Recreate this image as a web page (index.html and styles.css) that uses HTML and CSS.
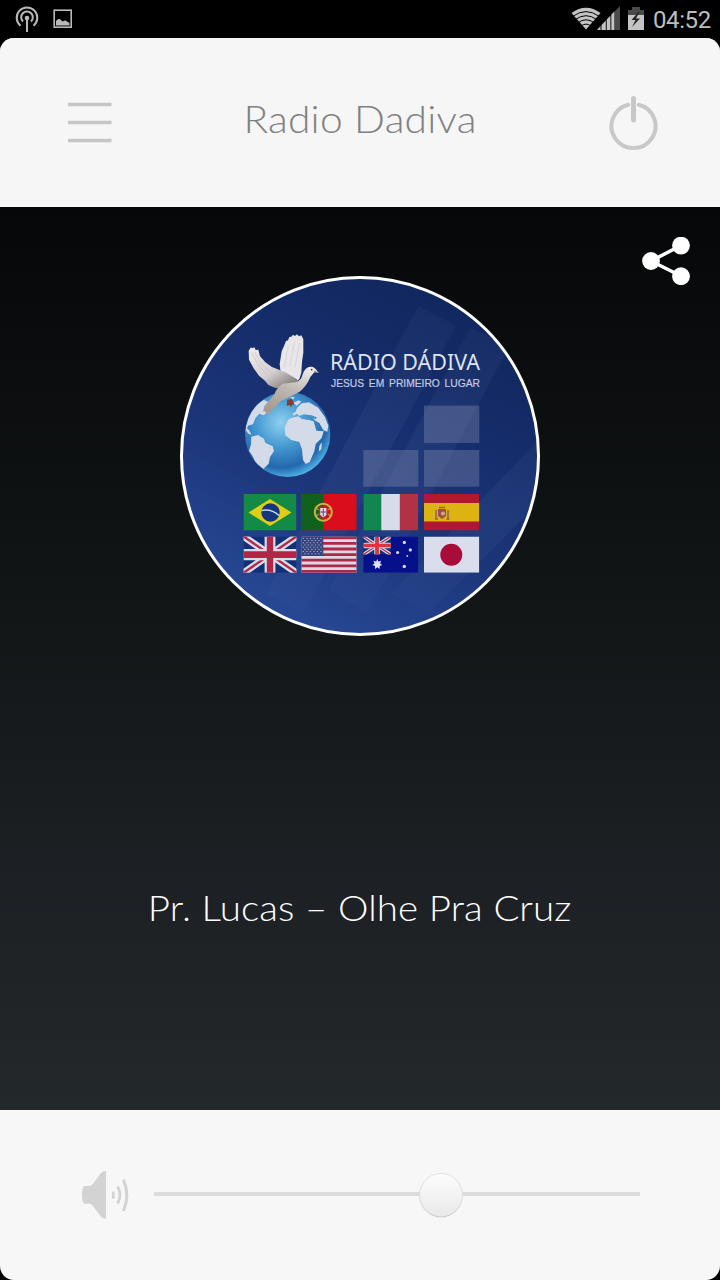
FILE: index.html
```html
<!DOCTYPE html>
<html lang="pt">
<head>
    <meta charset="UTF-8">
    <meta name="viewport" content="width=device-width, initial-scale=1.0">
    <title>Radio Dadiva</title>
    <link rel="stylesheet" href="styles.css">
</head>
<body>

    <div class="status-bar">
        <svg class="status-left" width="80" height="38" viewBox="0 0 80 38">
            <g fill="none" stroke="#b9b9b9" stroke-width="2">
                <path d="M20.5 25.7A10.3 10.3 0 1 1 33.5 25.7"/>
                <path d="M23 21.5A5.8 5.8 0 1 1 31 21.5"/>
                <path d="M27 18v14"/>
                <rect x="54.2" y="10.2" width="17" height="17" stroke-width="1.6"/>
            </g>
            <circle cx="27" cy="18" r="2.3" fill="#b9b9b9"/>
            <path d="M56 25.500v-4.500q1.500-2.500 4-2 1 1.500 3 2.500 2.500-2 4 0l2.500 1.500v2.500z" fill="#b9b9b9"/>
        </svg>
        <div class="status-right">
            <svg width="76" height="38" viewBox="570 0 76 38">
                <path d="M571.500 13Q586 2.500 600.500 13L586 29.500z" fill="#c4c4c4"/>
                <g fill="none" stroke="#000" stroke-width="1">
                    <path d="M573 16.200Q586 7 599 16.200"/>
                    <path d="M575.500 19.400Q586 12 596.500 19.400"/>
                    <path d="M578 22.600Q586 17 594 22.600"/>
                    <path d="M581 25.800Q586 22.500 591 25.800"/>
                </g>
                <path d="M620 6v24h-5V11z" fill="#4a4a4a"/>
                <path d="M597 30l3.500-4v4zM601.500 24.900l4.300-4.400V30h-4.300zM606.700 19.500l3.700-3.700V30h-3.700zM611.300 14.700l3.200-3.400V30h-3.200z" fill="#c4c4c4"/>
                <path d="M632 7h8v3h4v6h-16v-6h4z" fill="#4a4a4a"/>
                <path d="M628 15h16v15h-16z" fill="#c4c4c4"/>
                <path d="M638.500 12l-7 8h4l-3.500 7 8-8.500h-4l3.500-6.500z" fill="#222"/>
            </svg>
            <span class="clock">04:52</span>
        </div>
    </div>

    <div class="app">
        <div class="header">
            <svg class="menu-icon" width="44" height="42" viewBox="0 0 44 42">
                <path d="M0 2.500h43.500M0 20.500h43.500M0 38.500h43.500" stroke="#c6c6c6" stroke-width="3.600"/>
            </svg>
            <h1 class="title">Radio Dadiva</h1>
            <svg class="power-icon" width="50" height="56" viewBox="608 95 50 56" fill="none" stroke="#c8c8c8" stroke-linecap="round">
                <path d="M628.200 104.700A22 22 0 1 0 638.800 104.700" stroke-width="4"/>
                <path d="M633.500 98.500v21.500" stroke-width="5"/>
            </svg>
        </div>

        <div class="player">
            <svg class="share-icon" width="48" height="48" viewBox="642 237 48 48">
                <path d="M681 245.500L651 261l30 15" fill="none" stroke="#fff" stroke-width="3.500"/>
                <g fill="#fff">
                    <circle cx="681" cy="245.600" r="8.900"/>
                    <circle cx="651" cy="261" r="8.900"/>
                    <circle cx="681" cy="276.200" r="8.900"/>
                </g>
            </svg>

            <svg class="cover" width="360" height="360" viewBox="180 276 360 360">
                <defs>
                    <linearGradient id="sky" x1=".75" y1="0" x2=".25" y2="1">
                        <stop offset="0" stop-color="#10265c"/>
                        <stop offset=".25" stop-color="#142b67"/>
                        <stop offset=".6" stop-color="#1b3579"/>
                        <stop offset="1" stop-color="#294b98"/>
                    </linearGradient>
                    <linearGradient id="streak" x1="0" y1="0" x2="0" y2="1">
                        <stop offset="0" stop-color="#a5bde8" stop-opacity=".04"/>
                        <stop offset=".45" stop-color="#a5bde8" stop-opacity=".06"/>
                        <stop offset="1" stop-color="#a5bde8" stop-opacity=".02"/>
                    </linearGradient>
                    <radialGradient id="sea" cx=".42" cy=".36" r=".65">
                        <stop offset="0" stop-color="#8fd0ee"/>
                        <stop offset=".45" stop-color="#4399d1"/>
                        <stop offset=".82" stop-color="#2467ad"/>
                        <stop offset="1" stop-color="#4bafe2"/>
                    </radialGradient>
                    <linearGradient id="wing" x1="0" y1="0" x2=".8" y2="1">
                        <stop offset="0" stop-color="#f1eeee"/>
                        <stop offset=".6" stop-color="#d5d0d0"/>
                        <stop offset="1" stop-color="#7e7874"/>
                    </linearGradient>
                    <linearGradient id="body" x1=".8" y1="0" x2=".3" y2="1">
                        <stop offset="0" stop-color="#f0ece9"/>
                        <stop offset=".5" stop-color="#bfb7b1"/>
                        <stop offset="1" stop-color="#a69a91"/>
                    </linearGradient>
                    <clipPath id="disc"><circle cx="360" cy="456" r="178"/></clipPath>
                    <clipPath id="globe"><circle cx="173" cy="343" r="127"/></clipPath>
                    <symbol id="uk" viewBox="0 0 54 36" preserveAspectRatio="none">
                        <path d="M0 0h54v36H0z" fill="#123078"/>
                        <path d="M0 0l54 36M54 0L0 36" stroke="#d9dcea" stroke-width="7"/>
                        <path d="M0 0l54 36M54 0L0 36" stroke="#b32a49" stroke-width="2.400"/>
                        <path d="M27 0v36M0 18h54" stroke="#d9dcea" stroke-width="11"/>
                        <path d="M27 0v36M0 18h54" stroke="#b52546" stroke-width="6.500"/>
                    </symbol>
                </defs>

                <g clip-path="url(#disc)">
                    <path d="M180 276h360v360H180z" fill="url(#sky)"/>
                    <g transform="translate(170 265) scale(.33333)" fill="url(#streak)">
                        <path d="M745 122l113 60-458 863-110-60z"/>
                        <path d="M900 190l120 50-430 805-112-72z"/>
                        <path d="M1120 510v190l-345 345-110-60z"/>
                    </g>
                </g>
                <circle cx="360" cy="456" r="178.500" fill="none" stroke="#fff" stroke-width="3"/>

                <!-- globe -->
                <g transform="translate(230 320) scale(.33333)">
                    <circle cx="173" cy="343" r="128" fill="url(#sea)"/>
                    <g clip-path="url(#globe)" fill="#d3dae8">
                        <path d="M102 240l26 12-8 20-20 14-12-5-12 14-7 18-15 4-6 20-9-10 10-42 24-34z"/>
                        <path d="M45 322l12 8 8 16-12-6z"/>
                        <path d="M64 350l20-5 18 11 4 12 22 11 4 14-12 18-4 20-16 16-4 18-7 0-12-36-10-22-10-14 6-20z"/>
                        <path d="M183 294l22-5 10 8 22 3 14 4 8 28 22 2-6 20-18 18-4 22-14 32-12 6-8-12-3-32-8-22-24-6-18-14-2-24 10-22z"/>
                        <path d="M187 281l10-6 4-11 14-14 22-3 28 16 20 28 10 26-3 18-12-4-12-22-14-8-10-14-22-4-14 4-8-6-8 6z"/>
                        <path d="M188 250l18-9 8 4-14 12zM268 378l8-12-2 22-8 6zM180 232l14-2-5 9z"/>
                    </g>
                    <path d="M230 284l14 2 16 6-2 6-18-6z" fill="#4a91c5"/>
                </g>

                <!-- dove -->
                <g transform="translate(230 320) scale(.33333)">
                    <path d="M151 150l-2-18 6-38 8-18 5-13 6-2 4-10 6-1 5-6 6 4 6-5 6 6 7-3 6 12 0 40-4 28-2 32-6 19-16 14-28-2z" fill="#e8e6e8"/>
                    <path d="M163 142l12-65M179 140l15-75M195 143l14-74" fill="none" stroke="#cfccd0" stroke-width="2"/>
                    <path d="M56 92l7-10 3 3 7-3 4 8 8-1 5 20 16 18 20 14 40 16 34 20 8 12-7 10-42 7-24-3-20-8-10-13-18-15-16-22-14-26z" fill="url(#wing)"/>
                    <path d="M64 98l22 38 30 34M74 96l20 36 38 34" fill="none" stroke="#c4bec0" stroke-width="2"/>
                    <path d="M221 155q10-18 28-14l8 6 9 12-13-2-12 14q-10 26-32 44l-38 20-18 7q-20 23-42 43l-6-12-6 2 4-16 30-36q6-20 26-32l42-5 12-10z" fill="url(#body)"/>
                    <circle cx="245" cy="149" r="2.500" fill="#38251f"/>
                    <path d="M251 151l15 8-10-1z" fill="#806351"/>
                    <path d="M172 240l14-4 4 10 4 10-8-3-2 9-6-7-8 2z" fill="#803c36"/>
                </g>

                <text class="brand" x="330" y="370.300" textLength="150" lengthAdjust="spacingAndGlyphs">RÁDIO DÁDIVA</text>
                <text class="slogan" x="331" y="386.500" textLength="149" lengthAdjust="spacingAndGlyphs">JESUS EM PRIMEIRO LUGAR</text>

                <g fill="#8894b5" fill-opacity=".36">
                    <rect x="424" y="405.600" width="55.300" height="37.300"/>
                    <rect x="363.300" y="450" width="55" height="36.700"/>
                    <rect x="424" y="450" width="55.300" height="36.700"/>
                </g>

                <!-- flags, first row -->
                <svg x="243.500" y="494" width="53" height="36.600" viewBox="0 0 53 36.600">
                    <path d="M0 0h53v36.600H0z" fill="#138a45"/>
                    <path d="M5 18.500L26.500 5 48 18.500 26.500 32z" fill="#dfce16"/>
                    <circle cx="27" cy="18.500" r="9.200" fill="#16357f"/>
                    <path d="M18 16.500q10-2 17.500 5" fill="none" stroke="#c9d8e7" stroke-width="1.500"/>
                </svg>
                <svg x="301.300" y="494" width="55.400" height="36.600" viewBox="0 0 55.400 36.600">
                    <path d="M0 0h55.400v36.600H0z" fill="#d90d1b"/>
                    <path d="M0 0h22v36.600H0z" fill="#11611e"/>
                    <circle cx="22" cy="18.300" r="8.500" fill="none" stroke="#c7b540" stroke-width="2"/>
                    <path d="M14 14l16 8M14 22l16-8" stroke="#c7b540"/>
                    <path d="M17.500 12.500h9v8q-1 4-4.500 5-3.500-1-4.500-5z" fill="#c71c2d"/>
                    <path d="M19 14h6v7l-3 2.500-3-2.500z" fill="#e2e4ee"/>
                    <path d="M22 14.500v8M19.500 18h5" stroke="#4d6eae" stroke-width="1.300"/>
                </svg>
                <svg x="363.300" y="494" width="55" height="36.600" viewBox="0 0 55 36.600">
                    <path d="M0 0h18.500v36.600H0z" fill="#128650"/>
                    <path d="M18 0h19v36.600H18z" fill="#d8dbea"/>
                    <path d="M36.500 0H55v36.600H36.500z" fill="#b13246"/>
                </svg>
                <svg x="424" y="494" width="55.300" height="36.600" viewBox="0 0 55.300 36.600">
                    <path d="M0 0h55.300v36.600H0z" fill="#b11632"/>
                    <path d="M0 9h55.300v18.500H0z" fill="#dcb310"/>
                    <path d="M14 15h8v7l-4 3-4-3z" fill="#a54c45"/>
                    <path d="M12 16v9M24 16v9M11 25h3M22.500 25h3M15 13.500h6" stroke="#94604d" stroke-width="1.500"/>
                    <circle cx="19" cy="19.500" r="2" fill="#c3a9a5"/>
                </svg>

                <!-- flags, second row -->
                <use href="#uk" x="243.500" y="536.400" width="53" height="36.400"/>
                <svg x="301.300" y="536.400" width="55.400" height="36.400" viewBox="0 0 55.400 36.400">
                    <path d="M0 0h55.400v36.400H0z" fill="#dcd9e4"/>
                    <path d="M0 1.400h55.400M0 7h55.400M0 12.600h55.400M0 18.200h55.400M0 23.800h55.400M0 29.400h55.400M0 35h55.400" stroke="#ae2947" stroke-width="2.800"/>
                    <path d="M0 0h22v19.600H0z" fill="#35417a"/>
                    <path d="M1.500 2h20M3 4.200h18M1.500 6.400h20M3 8.600h18M1.500 10.800h20M3 13h18M1.500 15.200h20M3 17.400h18" stroke="#b1b6cf" stroke-dasharray="1.300 2.200"/>
                </svg>
                <svg x="363.300" y="536.400" width="55" height="36.400" viewBox="0 0 55 36.400">
                    <path d="M0 0h55v36.400H0z" fill="#06108a"/>
                    <use href="#uk" width="27.500" height="18.200"/>
                    <path d="M0 9.100h27.500M13.700 0v18.200" stroke="#d9363f" stroke-width="3"/>
                    <g fill="#dce0f0">
                        <path d="M14 22.500l1.100 2.700 2.700-.8-1 2.700 2.200 1.600-2.600.9-.2 2.900-2.200-1.700-2.200 1.700-.2-2.900-2.600-.9 2.200-1.600-1-2.700 2.700.8z"/>
                        <circle cx="41" cy="6" r="1.600"/>
                        <circle cx="34.300" cy="16" r="1.500"/>
                        <circle cx="47" cy="13.500" r="1.600"/>
                        <circle cx="44" cy="19.500" r=".9"/>
                        <circle cx="41" cy="30" r="1.700"/>
                    </g>
                </svg>
                <svg x="424" y="536.400" width="55.300" height="36.400" viewBox="0 0 55.300 36.400">
                    <path d="M0 0h55.300v36.400H0z" fill="#dadeec"/>
                    <circle cx="27.300" cy="18.400" r="11" fill="#a80d39"/>
                </svg>
            </svg>

            <p class="song">Pr. Lucas – Olhe Pra Cruz</p>
        </div>

        <div class="volume">
            <svg class="speaker" width="48" height="50" viewBox="81 1170 48 50">
                <path d="M84.500 1186H90q3-1 5-5l6-8q1.500-1.800 3-1.800h2v47.300h-2q-1.500 0-3-1.800l-6-8q-2-4-5-5h-5.500q-2.500-1-2.500-9t2.500-8.700z" fill="#d3d3d3"/>
                <g fill="none" stroke="#d3d3d3" stroke-width="2.800" stroke-linecap="round">
                    <path d="M113.300 1193v4.500"/>
                    <path d="M118 1187.500q4 7.500 0 15"/>
                    <path d="M123.800 1180.800q6 14.500 0 29" stroke-width="3"/>
                </g>
            </svg>
            <div class="slider">
                <div class="knob"></div>
            </div>
        </div>
    </div>

</body>
</html>
```
FILE: styles.css
```css
body {
    margin: 0;
    width: 720px;
    height: 1280px;
    background-color: #000;
    font-family: Lato, "Open Sans", sans-serif;
    overflow: hidden;
}

svg {
    display: block;
}

.status-bar {
    display: flex;
    justify-content: space-between;
    height: 38px;
}

.status-right {
    display: flex;
    width: 150px;
}

.clock {
    margin-left: 7px;
    font-family: Roboto, sans-serif;
    font-size: 24px;
    line-height: 40px;
    color: #bdbdbd;
    letter-spacing: -0.4px;
}

.app {
    display: flex;
    flex-direction: column;
    height: 1242px;
    border-radius: 14px;
    overflow: hidden;
    background-color: #f7f7f7;
}

.header {
    display: flex;
    align-items: center;
    justify-content: space-between;
    box-sizing: border-box;
    height: 169px;
    padding: 0 62px 0 68px;
    background-color: #f6f6f6;
}

.title {
    margin: 0 0 7px 0;
    font-size: 37px;
    font-weight: 300;
    line-height: 44px;
    letter-spacing: 0.2px;
    color: #808080;
    white-space: nowrap;
    transform: scaleX(1.1);
}

.player {
    position: relative;
    display: flex;
    flex-direction: column;
    align-items: center;
    box-sizing: border-box;
    height: 903px;
    padding-top: 69px;
    background: linear-gradient(#060709, #121617 45%, #1c1f23 72%, #23282b);
}

.share-icon {
    position: absolute;
    top: 30px;
    right: 30px;
}

.brand {
    font-family: "Noto Sans", sans-serif;
    font-size: 22.5px;
    fill: #dfe3f0;
}

.slogan {
    font-family: "Liberation Sans", sans-serif;
    font-size: 10.8px;
    fill: #c3cbe0;
    stroke: #c3cbe0;
    stroke-width: 0.2px;
    word-spacing: 2px;
}

.song {
    margin: 249px 0 0 0;
    font-size: 35px;
    font-weight: 300;
    line-height: 44px;
    letter-spacing: 0.1px;
    color: #fff;
    white-space: nowrap;
    transform: scaleX(1.1);
}

.volume {
    display: flex;
    align-items: center;
    flex: 1;
    padding: 0 80px 0 81px;
}

.slider {
    display: flex;
    align-items: center;
    flex: 1;
    height: 4px;
    margin: 0 0 2px 25px;
    background-color: #dcdcdc;
}

.knob {
    width: 42px;
    height: 42px;
    margin: 2px 0 0 266px;
    border-radius: 50%;
    background: linear-gradient(#fdfdfd, #e9e9e9);
    box-shadow: 0 0 0 1px #dedede, 0 1px 1px #999;
}
```
